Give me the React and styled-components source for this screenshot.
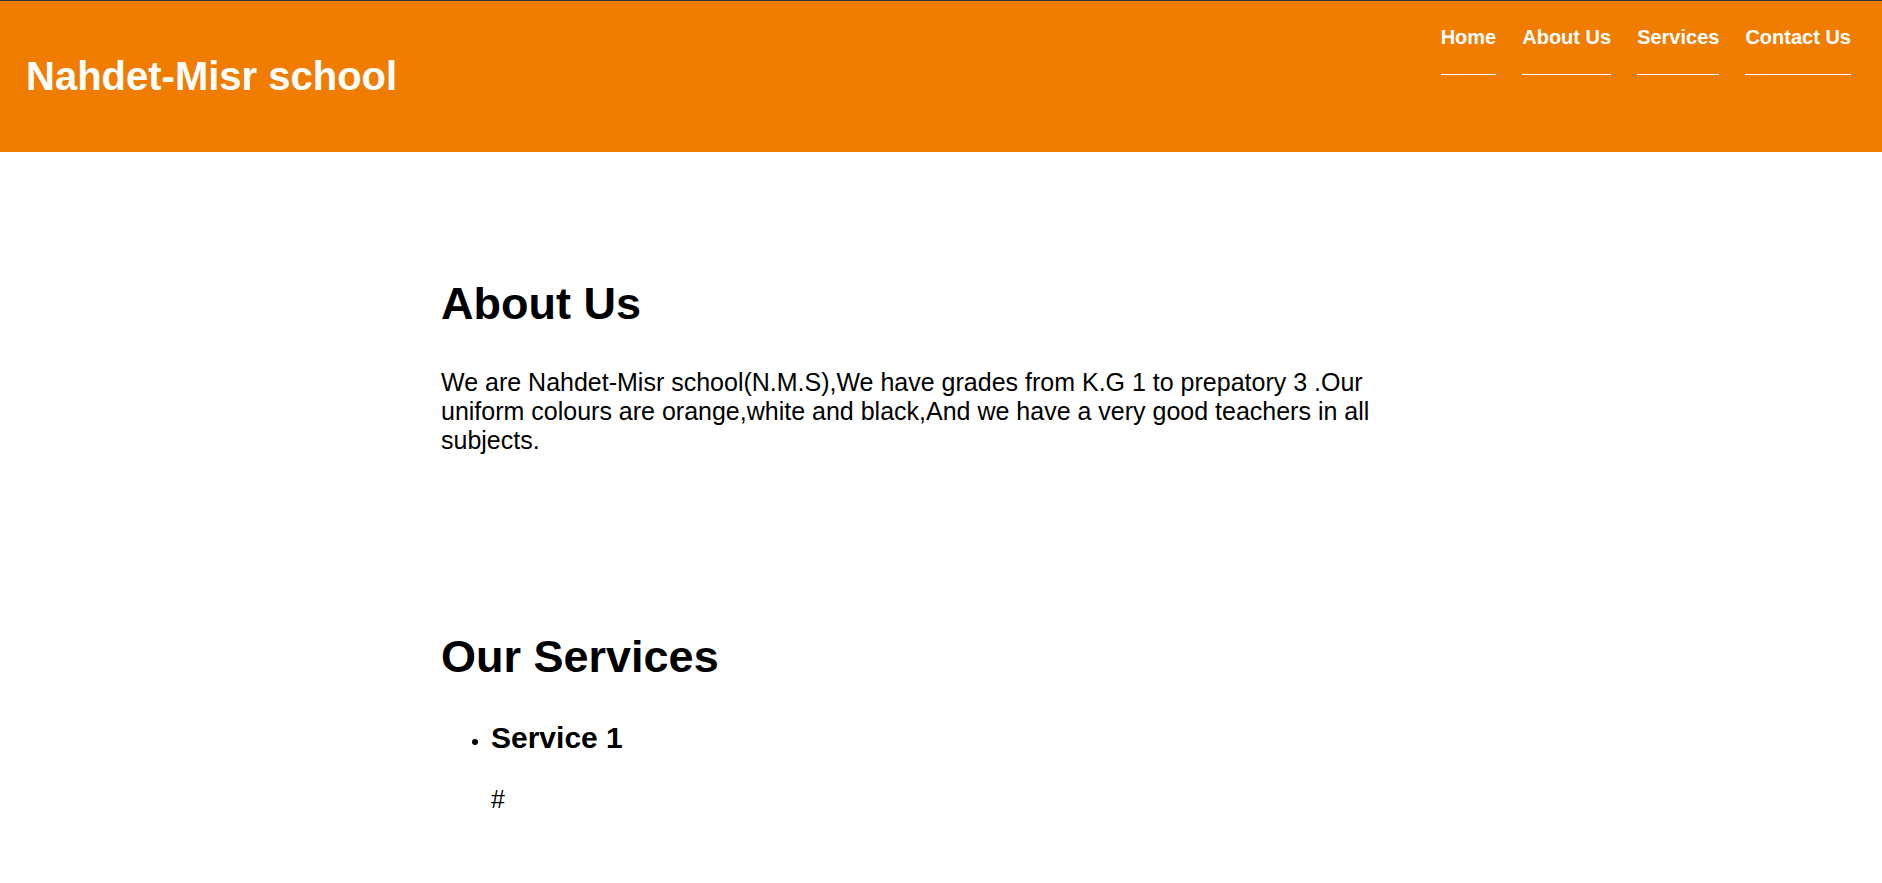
import React from 'react';
import styled, { createGlobalStyle } from 'styled-components';

const GlobalStyle = createGlobalStyle`
  body {
    margin: 0;
    background: #fff;
    color: #000;
    font-family: "Liberation Sans", Arial, sans-serif;
    font-size: 20px;
  }
`;

const Header = styled.header`
  display: flex;
  justify-content: space-between;
  align-items: flex-start;
  padding: 0 31px 0 26px;
  background: #f07d00;
  border-top: 1px solid #333;
  color: #fff;
`;

const Brand = styled.h1`
  margin: 50px 0 51px;
  font-size: 40px;
  line-height: 50px;
`;

const Nav = styled.nav`
  display: flex;
  gap: 26px;
  padding-top: 24px;
`;

const NavLink = styled.a`
  padding-bottom: 25px;
  border-bottom: 1px solid #fff;
  color: #fff;
  font-size: 20px;
  font-weight: bold;
  line-height: 24px;
  text-decoration: none;
`;

const Content = styled.main`
  max-width: 1000px;
  margin: 0 auto;
`;

const Section = styled.section`
  padding: 124px 0 0;
  margin-bottom: 50px;
`;

const Title = styled.h2`
  margin: 0 0 36px;
  font-size: 45px;
  line-height: 56px;
`;

const Text = styled.p`
  margin: 0;
  font-size: 25px;
  line-height: 29px;
`;

const ServiceList = styled.ul`
  margin: 0;
  padding-left: 50px;
`;

const ServiceName = styled.h3`
  margin: 0 0 30px;
  font-size: 30px;
  line-height: 34px;
`;

const links = [
  ['Home', '#home'],
  ['About Us', '#about'],
  ['Services', '#services'],
  ['Contact Us', '#contact'],
];

export default function App() {
  return (
    <>
      <GlobalStyle />
      <Header id="home">
        <Brand>Nahdet-Misr school</Brand>
        <Nav>
          {links.map(([label, href]) => (
            <NavLink key={href} href={href}>{label}</NavLink>
          ))}
        </Nav>
      </Header>
      <Content>
        <Section id="about">
          <Title>About Us</Title>
          <Text>
            We are Nahdet-Misr school(N.M.S),We have grades from K.G 1 to prepatory 3 .Our
            uniform colours are orange,white and black,And we have a very good teachers in all
            subjects.
          </Text>
        </Section>
        <Section id="services">
          <Title>Our Services</Title>
          <ServiceList>
            <li>
              <ServiceName>Service 1</ServiceName>
              <Text>#</Text>
            </li>
          </ServiceList>
        </Section>
      </Content>
    </>
  );
}
